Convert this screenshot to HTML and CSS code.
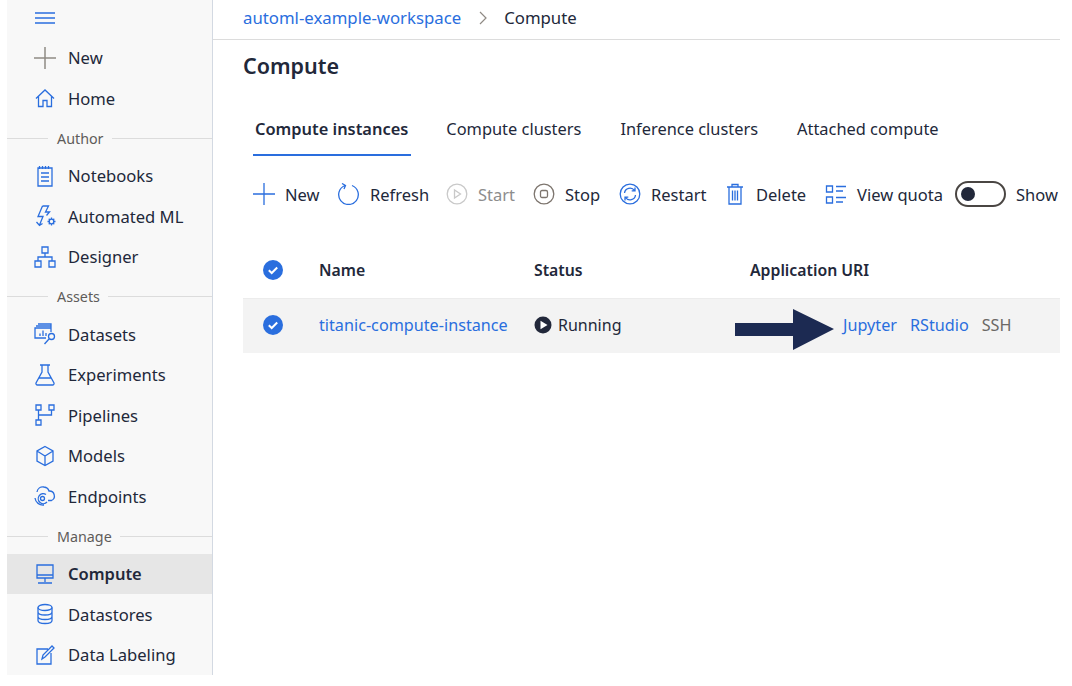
FILE: index.html
```html
<!DOCTYPE html>
<html lang="en">
<head>
<meta charset="utf-8">
<title>Compute</title>
<link rel="stylesheet" href="styles.css">
</head>
<body>
<div class="app">
  <nav class="sidebar">
    <div class="menu-row">
      <svg class="ico" viewBox="0 0 22 22"><path d="M1 6h20M1 11h20M1 16h20"/></svg>
    </div>
    <div class="nav-item"><svg class="ico grey" viewBox="0 0 22 22"><path d="M11 0v22M0 11h22"/></svg><span>New</span></div>
    <div class="nav-item"><svg class="ico" viewBox="0 0 22 22"><path d="M2 11.500 11 3l9 8.500M4.500 9.500V19.500h4.500v-6h4v6h4.500V9.500"/></svg><span>Home</span></div>
    <div class="group"><span>Author</span></div>
    <div class="nav-item"><svg class="ico" viewBox="0 0 22 22"><path d="M4 3h14v18H4zM5.500 1v3M8.500 1v3M11.500 1v3M14.500 1v3M7 8h8M7 12h8M7 16h8"/></svg><span>Notebooks</span></div>
    <div class="nav-item"><svg class="ico" viewBox="0 0 22 22"><path d="M8.500 1h6L11.500 7h4l-3 3.500M8.500 1 4 11.500h5L5.500 20M2.500 17l3 3.500 3-2"/><circle cx="17.500" cy="16.500" r="2.300"/><path d="M17.500 12.500v1.700M17.500 18.800v1.700M13.500 16.500h1.700M19.800 16.500h1.700M14.700 13.700l1.200 1.200M19.100 18.100l1.200 1.200M20.300 13.700l-1.200 1.200M15.900 18.100l-1.200 1.200"/></svg><span>Automated ML</span></div>
    <div class="nav-item"><svg class="ico" viewBox="0 0 22 22"><path d="M8 1h6v6H8zM1 15h6v6H1zM15 15h6v6h-6zM11 7v4M4 15v-4h14v4"/></svg><span>Designer</span></div>
    <div class="group"><span>Assets</span></div>
    <div class="nav-item"><svg class="ico" viewBox="0 0 22 22"><path d="M4 1h13v2M2 3h15v6M12 15H1V5h16M6 13v-2.500M9 13V7.500M12 13v-3"/><circle cx="17.500" cy="13.500" r="3"/><path d="m15 16-4.500 5"/></svg><span>Datasets</span></div>
    <div class="nav-item"><svg class="ico" viewBox="0 0 22 22"><path d="M6 1h10M8 1v7L2 19a1.500 1.500 0 0 0 1.500 2h15a1.500 1.500 0 0 0 1.500-2L14 8V1M5 14h12"/></svg><span>Experiments</span></div>
    <div class="nav-item"><svg class="ico" viewBox="0 0 22 22"><path d="M2 1h5v5H2zM15 1h5v5h-5zM2 16h5v5H2zM4.500 6v10M4.500 11h13V6"/></svg><span>Pipelines</span></div>
    <div class="nav-item"><svg class="ico" viewBox="0 0 22 22"><path d="M11 1.500 19 6v10l-8 4.500L3 16V6zM3 6l8 5 8-5M11 11v9.500"/></svg><span>Models</span></div>
    <div class="nav-item"><svg class="ico" viewBox="0 0 22 22"><path d="M3 7C3.500 3.500 6.500 1.500 10 2c2.500.300 4.500 2 5 4a5 5 0 0 1 2.500 9.500H14M12 9.500a5 5 0 1 0 1 7.500M1 13a8 8 0 0 0 9 7"/><circle cx="8.500" cy="13.500" r="2"/></svg><span>Endpoints</span></div>
    <div class="group"><span>Manage</span></div>
    <div class="nav-item active"><svg class="ico" viewBox="0 0 22 22"><path d="M3 2h16v13H3zM3 12h16M11 15v4M4 20h14"/></svg><span>Compute</span></div>
    <div class="nav-item"><svg class="ico" viewBox="0 0 22 22"><ellipse cx="11" cy="4.500" rx="7" ry="3"/><path d="M4 4.500v13c0 1.700 3 3 7 3s7-1.300 7-3v-13M4 9c0 1.700 3 3 7 3s7-1.300 7-3M4 13.500c0 1.700 3 3 7 3s7-1.300 7-3"/></svg><span>Datastores</span></div>
    <div class="nav-item"><svg class="ico" viewBox="0 0 22 22"><path d="M17 9v11H3V5h11M8 15l1-4 9-9 2 2-9 9z"/></svg><span>Data Labeling</span></div>
  </nav>

  <main class="content">
    <header class="crumbs">
      <a class="link">automl-example-workspace</a>
      <svg class="chev" viewBox="0 0 8 14"><path d="m1 1 6 6-6 6"/></svg>
      <span>Compute</span>
    </header>
    <h1 class="title">Compute</h1>
    <div class="tabs">
      <div class="tab current">Compute instances</div>
      <div class="tab">Compute clusters</div>
      <div class="tab">Inference clusters</div>
      <div class="tab">Attached compute</div>
    </div>
    <div class="toolbar">
      <div class="tool w-new"><svg class="tico" viewBox="0 0 22 22"><path d="M11 0v22M0 11h22"/></svg><span>New</span></div>
      <div class="tool w-refresh"><svg class="tico" viewBox="0 0 22 22"><path d="M7 2.500a9.800 9.800 0 1 0 7 0M4 .5 7.500 2.500 6 6"/></svg><span>Refresh</span></div>
      <div class="tool w-start disabled"><svg class="tico" viewBox="0 0 22 22"><circle cx="11" cy="11" r="9.800"/><path d="M8.500 7v8l6-4z"/></svg><span>Start</span></div>
      <div class="tool w-stop"><svg class="tico brown" viewBox="0 0 22 22"><circle cx="11" cy="11" r="9.800"/><rect x="7.500" y="7.500" width="7" height="7" rx="1.500"/></svg><span>Stop</span></div>
      <div class="tool w-restart"><svg class="tico" viewBox="0 0 22 22"><circle cx="11" cy="11" r="9.800"/><path d="M5.500 10a5.500 5.500 0 0 1 10-2.500M16.500 12a5.500 5.500 0 0 1-10 2.500M16 4.500v3.300h-3.300M6 17.500v-3.300h3.300"/></svg><span>Restart</span></div>
      <div class="tool w-delete"><svg class="tico" viewBox="0 0 22 22"><path d="M3 4h16M8 4V1.500h6V4M5 4v17h12V4M8.500 7.500v10M11 7.500v10M13.500 7.500v10"/></svg><span>Delete</span></div>
      <div class="tool w-quota"><svg class="tico" viewBox="0 0 22 22"><path d="M1.500 3h6v6h-6zM1.500 14h6v6h-6zM11 3.500h10M11 8h7M11 14.500h10M11 19h7"/></svg><span>View quota</span></div>
      <div class="switch"><span class="knob"></span></div>
      <span class="show">Show</span>
    </div>
    <div class="row head">
      <span class="cell-check"><svg class="check" viewBox="0 0 20 20"><circle cx="10" cy="10" r="10"/><path d="m5.800 10.300 2.900 2.700 5.500-5.500"/></svg></span>
      <span class="cell-name">Name</span>
      <span class="cell-status">Status</span>
      <span>Application URI</span>
    </div>
    <div class="row item">
      <span class="cell-check"><svg class="check" viewBox="0 0 20 20"><circle cx="10" cy="10" r="10"/><path d="m5.800 10.300 2.900 2.700 5.500-5.500"/></svg></span>
      <a class="cell-name link">titanic-compute-instance</a>
      <span class="cell-status running"><svg class="play" viewBox="0 0 18 18"><circle cx="9" cy="9" r="8.500"/><path d="M6.500 4.800v8.400L13.500 9z"/></svg>Running</span>
      <span class="uris"><a class="link">Jupyter</a><a class="link">RStudio</a><span class="ssh">SSH</span></span>
      <svg class="arrow" viewBox="0 0 100 42"><path d="M0 14h58V0l41 20-41 21V27H0z"/></svg>
    </div>
  </main>
</div>
</body>
</html>
```

FILE: styles.css
```css
* { box-sizing: border-box; }
html, body { margin: 0; background: #fff; }
body {
  width: 1072px;
  height: 686px;
  overflow: hidden;
  font-family: "Noto Sans", "Open Sans", sans-serif;
  font-size: 16.500px;
  color: #22283a;
}
.app { display: flex; height: 675px; padding-left: 7px; padding-right: 12px; }
.sidebar {
  width: 206px;
  flex: none;
  background: #f8f8f8;
  border-right: 1px solid #d3d9e2;
  display: flex;
  flex-direction: column;
  font-size: 16.600px;
}
.menu-row { height: 39px; padding: 0 0 2px 27px; display: flex; align-items: center; }
.ico {
  width: 22px;
  height: 22px;
  flex: none;
  fill: none;
  stroke: #2a6ede;
  stroke-width: 1.300;
}
.ico.grey { stroke: #8f8a84; stroke-width: 1.500; }
.nav-item {
  height: 40.500px;
  flex: none;
  display: flex;
  align-items: center;
  gap: 12px;
  padding-left: 27px;
  white-space: nowrap;
}
.nav-item.active { background: #e6e6e6; font-weight: 600; font-size: 16.500px; }
.group {
  height: 39px;
  flex: none;
  display: flex;
  align-items: center;
  color: #5f5c5a;
  font-size: 14.300px;
}
.group::before { content: ""; width: 41px; height: 1px; background: #dcdcdc; margin-right: 9px; }
.group::after { content: ""; flex: 1; height: 1px; background: #dcdcdc; margin-left: 8px; }
.group + .nav-item { margin-top: -2px; }
.content { flex: 1; min-width: 0; display: flex; flex-direction: column; overflow: hidden; }
.link { color: #2a6ede; }
.crumbs {
  height: 40px;
  padding: 0 0 4px 30px;
  display: flex;
  align-items: center;
  gap: 17.500px;
  border-bottom: 1px solid #dcdcdc;
  font-size: 16.750px;
}
.chev { width: 8px; height: 14px; fill: none; stroke: #8f8a84; stroke-width: 1.200; }
.title {
  margin: 0;
  padding: 8px 0 0 30px;
  height: 64px;
  font-size: 21.500px;
  line-height: 36px;
  font-weight: 600;
}
.tabs { display: flex; gap: 35px; padding-left: 40px; height: 52px; font-size: 16.400px; }
.tab { height: 52px; padding: 0 2px; line-height: 50px; white-space: nowrap; }
.tab.current { font-weight: 600; border-bottom: 2px solid #2a6ede; padding-right: 3px; margin-right: -2px; }
.toolbar {
  display: flex;
  align-items: center;
  height: 40px;
  margin-top: 18px;
  padding-left: 40px;
  white-space: nowrap;
}
.tool { display: flex; align-items: center; gap: 10px; flex: none; }
.tico { width: 22px; height: 22px; flex: none; fill: none; stroke: #2a6ede; stroke-width: 1.300; }
.tico.brown { stroke: #7d756e; }
.tool.disabled { color: #8d8d8d; }
.tool.disabled .tico { stroke: #c9c9c9; }
.w-new { width: 85px; }
.w-refresh { width: 108px; }
.w-start { width: 87px; }
.w-stop { width: 86px; }
.w-restart { width: 105px; }
.w-delete { width: 101px; }
.w-quota { width: 130px; }
.switch {
  width: 51px;
  height: 26px;
  flex: none;
  border: 2px solid #4a4643;
  border-radius: 13px;
  padding: 4px;
}
.knob { display: block; width: 14px; height: 14px; border-radius: 50%; background: #22283a; }
.show { margin-left: 10px; }
.row { display: flex; align-items: center; margin-left: 30px; white-space: nowrap; }
.head {
  height: 54px;
  margin-top: 31px;
  padding-bottom: 4px;
  font-size: 15.800px;
  font-weight: 600;
  border-bottom: 1px solid #ececec;
}
.item { height: 54px; padding-bottom: 2px; background: #f3f3f3; position: relative; font-size: 16.200px; }
.cell-check { width: 76px; padding-left: 20px; display: flex; align-items: center; }
.check { width: 20px; height: 20px; fill: #2a6ede; }
.check path { fill: none; stroke: #fff; stroke-width: 2; }
.cell-name { width: 215px; }
.cell-status { width: 216px; }
.running { display: flex; align-items: center; gap: 6px; font-size: 16px; }
.play { width: 18px; height: 18px; fill: #22283a; }
.play path { fill: #fff; }
.uris { display: flex; gap: 13px; padding-left: 93px; }
.ssh { color: #6b6866; }
.arrow { position: absolute; left: 492px; top: 10px; width: 100px; height: 42px; fill: #1c2a52; }
```
